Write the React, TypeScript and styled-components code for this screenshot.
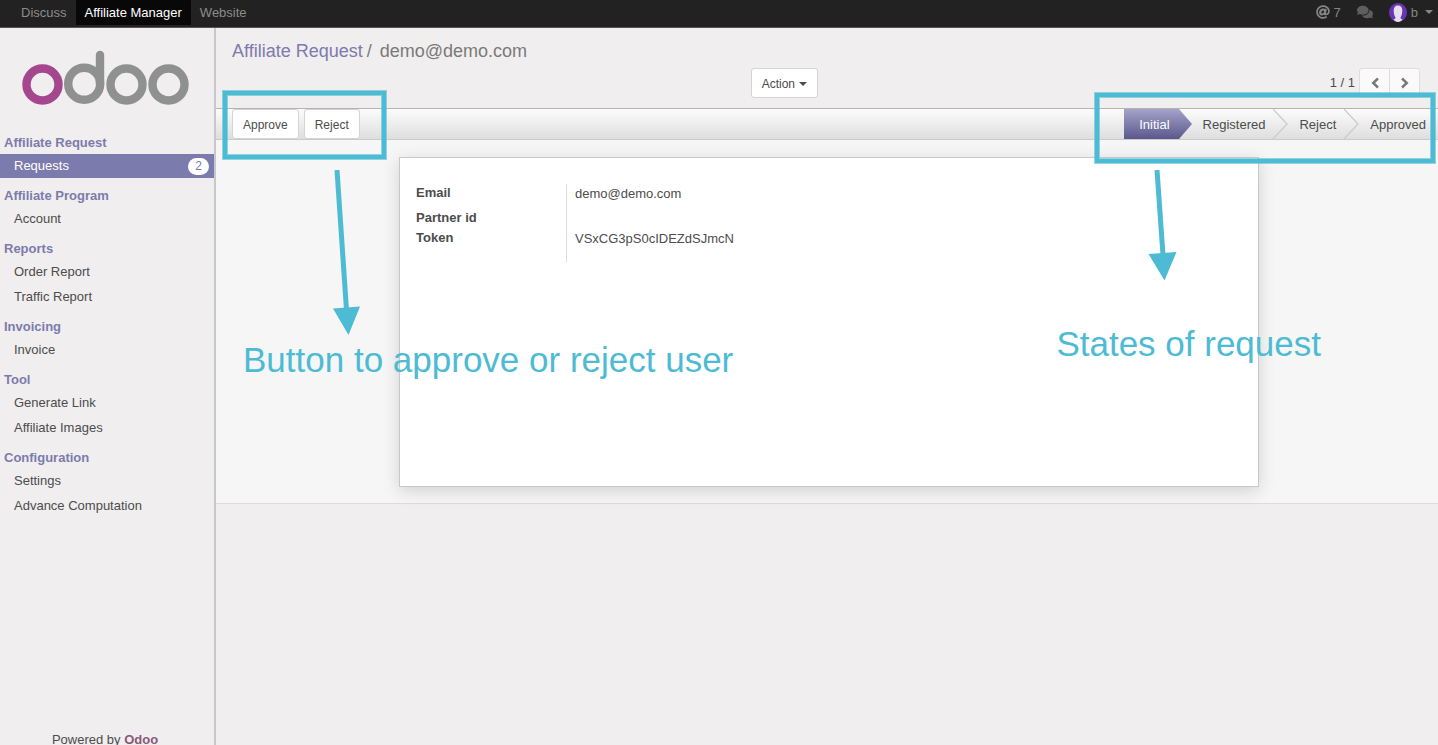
import React from "react";
import styled, { createGlobalStyle } from "styled-components";
import { FaAt, FaComments } from "react-icons/fa";

const PURPLE = "#7c7bad";
const CYAN = "#4dbbd3";
const BORDER = "#c8c8cc";

const GlobalStyle = createGlobalStyle`
  * { box-sizing: border-box; }
  body {
    margin: 0;
    background: #f0eeee;
    color: #4c4c4c;
    font: 13px/18px "Liberation Sans", Arial, sans-serif;
  }
  a { color: inherit; text-decoration: none; }
  ul, ol, dl, dd, h1, h2 { margin: 0; padding: 0; list-style: none; }
  button { font-family: inherit; color: inherit; cursor: pointer; }
  svg { display: block; flex: none; }
`;

const Page = styled.div`
  position: relative;
  display: flex;
  flex-direction: column;
  height: 100vh;
  overflow: hidden;
`;

const TopBar = styled.header`
  display: flex;
  flex: none;
  justify-content: space-between;
  height: 28px;
  padding: 0 5px 0 12px;
  background: #222;
  border-bottom: 1px solid #555;
  color: #8c8c8c;
`;

const TopMenu = styled.nav`
  display: flex;
  height: 25px;
`;

const TopLink = styled.a<{ $active?: boolean }>`
  padding: 0 9px;
  line-height: 25px;
  color: ${(p) => (p.$active ? "#fff" : "#8c8c8c")};
  background: ${(p) => (p.$active ? "#080808" : "transparent")};
`;

const Systray = styled.div`
  display: flex;
  align-items: center;
  gap: 16px;
  height: 24px;
`;

const TrayButton = styled.button<{ $dim?: boolean }>`
  display: flex;
  align-items: center;
  gap: 4px;
  height: 24px;
  padding: 0;
  border: 0;
  background: none;
  font-size: 13px;
  color: ${(p) => (p.$dim ? "#5e5e5e" : "#858585")};
`;

const Caret = styled.span`
  border: 4px solid transparent;
  border-top-color: currentColor;
  border-bottom: 0;
`;

const UserName = styled.span`
  padding-right: 3px;
`;

const Body = styled.div`
  display: flex;
  flex: 1;
  min-height: 0;
`;

const Sidebar = styled.aside`
  display: flex;
  flex: none;
  flex-direction: column;
  width: 216px;
  border-right: 2px solid ${BORDER};
`;

const LogoLink = styled.a`
  padding: 20px 0 24px 20px;
`;

const MenuSections = styled.nav`
  display: flex;
  flex: 1;
  flex-direction: column;
  gap: 6px;
`;

const SectionTitle = styled.h2`
  padding-left: 4px;
  font-size: 13px;
  line-height: 23px;
  color: ${PURPLE};
`;

const MenuList = styled.ul`
  display: flex;
  flex-direction: column;
  gap: 1px;
`;

const MenuLink = styled.a<{ $active?: boolean }>`
  display: flex;
  align-items: center;
  justify-content: space-between;
  height: 24px;
  padding: 0 5px 0 14px;
  color: ${(p) => (p.$active ? "#fff" : "#4c4c4c")};
  background: ${(p) => (p.$active ? PURPLE : "transparent")};
`;

const Count = styled.span`
  width: 21px;
  border-radius: 9px;
  background: #fff;
  color: ${PURPLE};
  font-size: 12px;
  line-height: 17px;
  text-align: center;
`;

const Powered = styled.footer`
  height: 14px;
  padding-right: 4px;
  text-align: center;
  a { color: #875a7b; font-weight: bold; }
`;

const Main = styled.main`
  flex: 1;
  min-width: 0;
`;

const ControlPanel = styled.div`
  height: 80px;
  padding-top: 10px;
`;

const Breadcrumb = styled.h1`
  display: flex;
  gap: 4px;
  height: 30px;
  padding-left: 16px;
  font-size: 18px;
  font-weight: normal;
  line-height: 26px;
  color: #7a7a7a;
  a { color: ${PURPLE}; }
  span:last-child { padding-left: 4px; }
`;

const ControlRow = styled.div`
  display: grid;
  grid-template-columns: 7fr 9fr;
`;

const ControlTools = styled.div`
  display: flex;
  grid-column: 2;
  justify-content: space-between;
  padding-right: 18px;
`;

const Button = styled.button`
  display: flex;
  align-items: center;
  gap: 4px;
  height: 30px;
  padding: 1px 10px 0;
  border: 1px solid #d4d4d4;
  border-radius: 3px;
  background: #fff;
  font-size: 12px;
`;

const Pager = styled.div`
  display: flex;
  line-height: 30px;
  gap: 4px;
`;

const PagerButtons = styled.div`
  display: flex;
  height: 30px;
  border: 1px solid #dedede;
  border-radius: 3px;
  background: #fafafa;
`;

const PagerButton = styled.button`
  display: flex;
  align-items: center;
  justify-content: center;
  width: 29px;
  padding: 0;
  border: 0;
  background: none;
  color: #777;
  & + & { border-left: 1px solid #dedede; width: 30px; }
`;

const StatusBar = styled.div`
  display: flex;
  justify-content: space-between;
  height: 32px;
  border-top: 1px solid #b4b4b4;
  border-bottom: 1px solid #cacaca;
  background: linear-gradient(#fcfcfc, #dedede);
`;

const Actions = styled.div`
  display: flex;
  gap: 5px;
  padding-left: 16px;
`;

const Steps = styled.ol`
  display: flex;
`;

const Step = styled.li`
  display: flex;
  &:last-child button { padding-right: 12px; }
`;

const StepButton = styled.button<{ $current?: boolean }>`
  height: 30px;
  padding: ${(p) => (p.$current ? "0 9px 0 15px" : "0 8px 0 11px")};
  border: 0;
  font-size: 13px;
  color: ${(p) => (p.$current ? "#fff" : "#4c4c4c")};
  background: ${(p) => (p.$current ? "linear-gradient(#a5a3c9, #5a588c)" : "none")};
`;

const FormView = styled.div`
  padding: 17px 16px 16px 20px;
  border-bottom: 1px solid #dcdcdc;
  background: #f6f6f6;
`;

const Sheet = styled.section`
  max-width: 860px;
  min-height: 330px;
  margin: 0 auto;
  padding: 26px 16px;
  border: 1px solid ${BORDER};
  background: #fff;
  box-shadow: 0 4px 16px rgba(0, 0, 0, 0.15);
`;

const Fields = styled.dl`
  display: grid;
  grid-template-columns: 150px 1fr;
  grid-template-rows: 25px 20px 33px;
  dt { font-weight: bold; }
  dd { padding-left: 8px; border-left: 1px solid #ddd; line-height: 20px; }
`;

const Highlight = styled.div<{ $side: "left" | "right" }>`
  position: absolute;
  top: ${(p) => (p.$side === "left" ? 91 : 93)}px;
  ${(p) => (p.$side === "left" ? "left: 223px;" : "right: 3px;")}
  width: ${(p) => (p.$side === "left" ? 163 : 340)}px;
  height: ${(p) => (p.$side === "left" ? 68 : 70)}px;
  border: 4px solid ${CYAN};
  box-shadow: 0 0 0 1px ${CYAN}99, inset 0 0 0 1px ${CYAN}99;
  pointer-events: none;
`;

const Note = styled.div<{ $side: "left" | "right" }>`
  position: absolute;
  top: 170px;
  ${(p) => (p.$side === "left" ? "left: 243px;" : "right: 117px;")}
  color: ${CYAN};
  font-size: 35px;
  line-height: 40px;
  white-space: nowrap;
  pointer-events: none;
  svg { margin-left: ${(p) => (p.$side === "left" ? 87 : 89)}px; }
`;

const sections: { title: string; items: { label: string; count?: number }[] }[] = [
  { title: "Affiliate Request", items: [{ label: "Requests", count: 2 }] },
  { title: "Affiliate Program", items: [{ label: "Account" }] },
  { title: "Reports", items: [{ label: "Order Report" }, { label: "Traffic Report" }] },
  { title: "Invoicing", items: [{ label: "Invoice" }] },
  { title: "Tool", items: [{ label: "Generate Link" }, { label: "Affiliate Images" }] },
  { title: "Configuration", items: [{ label: "Settings" }, { label: "Advance Computation" }] },
];

const steps = ["Initial", "Registered", "Reject", "Approved"];

const Logo = () => (
  <svg width="172" height="59" viewBox="0 0 172 59" fill="none" strokeWidth="8.4" role="img" aria-label="odoo">
    <circle cx="22.5" cy="36.5" r="16" stroke="#a5478f" />
    <g stroke="#8f9190">
      <circle cx="64.2" cy="35.8" r="16" />
      <path d="M80 36V7" strokeLinecap="round" />
      <circle cx="106.5" cy="36.5" r="16" />
      <circle cx="148.5" cy="36.5" r="16" />
    </g>
  </svg>
);

const Avatar = () => (
  <svg width="18" height="20" viewBox="0 0 18 20">
    <ellipse cx="9" cy="10.5" rx="9" ry="9.5" fill="#6a35b5" />
    <path d="M9 3.500c3 0 4.300 2 4.300 5 0 3.500-.8 5.500-1.900 7.200.2.900 1 1.300 2.200 1.800C12.300 19 11 20 9 20s-3.300-1-4.600-2.500c1.200-.5 2-.9 2.200-1.800C5.500 14 4.700 12 4.700 8.500c0-3 1.300-5 4.300-5z" fill="#e4e0ee" />
  </svg>
);

const Chevron = ({ flip }: { flip?: boolean }) => (
  <svg width="10" height="12" viewBox="0 0 10 12" fill="none" stroke="currentColor" strokeWidth="2.4">
    <path d={flip ? "M2 1.500L6.800 6L2 10.500" : "M8 1.500L3.200 6L8 10.500"} />
  </svg>
);

const StepArrow = ({ filled }: { filled: boolean }) =>
  filled ? (
    <svg width="13" height="30" viewBox="0 0 13 30">
      <defs>
        <linearGradient id="step" x1="0" y1="0" x2="0" y2="1">
          <stop offset="0" stopColor="#a5a3c9" />
          <stop offset="1" stopColor="#5a588c" />
        </linearGradient>
      </defs>
      <path d="M0 0L13 15L0 30z" fill="url(#step)" />
    </svg>
  ) : (
    <svg width="15" height="30" viewBox="0 0 15 30" fill="none">
      <path d="M0 0L14 15L0 30" stroke="#cccccc" strokeWidth="1.300" />
    </svg>
  );

export default function App() {
  return (
    <Page>
      <GlobalStyle />
      <TopBar>
        <TopMenu>
          <TopLink href="#discuss">Discuss</TopLink>
          <TopLink href="#affiliate" $active>Affiliate Manager</TopLink>
          <TopLink href="#website">Website</TopLink>
        </TopMenu>
        <Systray>
          <TrayButton><FaAt size={14} />7</TrayButton>
          <TrayButton $dim aria-label="Conversations"><FaComments size={16} /></TrayButton>
          <TrayButton><Avatar /><UserName>b</UserName><Caret /></TrayButton>
        </Systray>
      </TopBar>

      <Body>
        <Sidebar>
          <LogoLink href="#home"><Logo /></LogoLink>
          <MenuSections>
            {sections.map((section) => (
              <section key={section.title}>
                <SectionTitle>{section.title}</SectionTitle>
                <MenuList>
                  {section.items.map((item) => (
                    <li key={item.label}>
                      <MenuLink href="#menu" $active={item.label === "Requests"}>
                        {item.label}
                        {item.count && <Count>{item.count}</Count>}
                      </MenuLink>
                    </li>
                  ))}
                </MenuList>
              </section>
            ))}
          </MenuSections>
          <Powered>Powered by <a href="#odoo">Odoo</a></Powered>
        </Sidebar>

        <Main>
          <ControlPanel>
            <Breadcrumb>
              <a href="#requests">Affiliate Request</a>
              <span>/</span>
              <span>demo@demo.com</span>
            </Breadcrumb>
            <ControlRow>
              <ControlTools>
                <Button>Action <Caret /></Button>
                <Pager>
                  1 / 1
                  <PagerButtons>
                    <PagerButton aria-label="Previous"><Chevron /></PagerButton>
                    <PagerButton aria-label="Next"><Chevron flip /></PagerButton>
                  </PagerButtons>
                </Pager>
              </ControlTools>
            </ControlRow>
          </ControlPanel>

          <StatusBar>
            <Actions>
              <Button>Approve</Button>
              <Button>Reject</Button>
            </Actions>
            <Steps>
              {steps.map((label, i) => (
                <Step key={label}>
                  <StepButton $current={i === 0}>{label}</StepButton>
                  {i < steps.length - 1 && <StepArrow filled={i === 0} />}
                </Step>
              ))}
            </Steps>
          </StatusBar>

          <FormView>
            <Sheet>
              <Fields>
                <dt>Email</dt>
                <dd>demo@demo.com</dd>
                <dt>Partner id</dt>
                <dd />
                <dt>Token</dt>
                <dd>VSxCG3pS0cIDEZdSJmcN</dd>
              </Fields>
            </Sheet>
          </FormView>
        </Main>
      </Body>

      <Highlight $side="left" />
      <Highlight $side="right" />
      <Note $side="left">
        <svg width="34" height="170" viewBox="0 0 34 170">
          <path d="M7 0L16.500 140" stroke={CYAN} strokeWidth="5" />
          <path d="M3 138.500L30 136.500L18.500 165z" fill={CYAN} />
        </svg>
        Button to approve or reject user
      </Note>
      <Note $side="right">
        <svg width="34" height="154" viewBox="0 0 34 154">
          <path d="M12 0L18 85" stroke={CYAN} strokeWidth="5" />
          <path d="M3.500 84L31.500 82L19.500 110.500z" fill={CYAN} />
        </svg>
        States of request
      </Note>
    </Page>
  );
}
